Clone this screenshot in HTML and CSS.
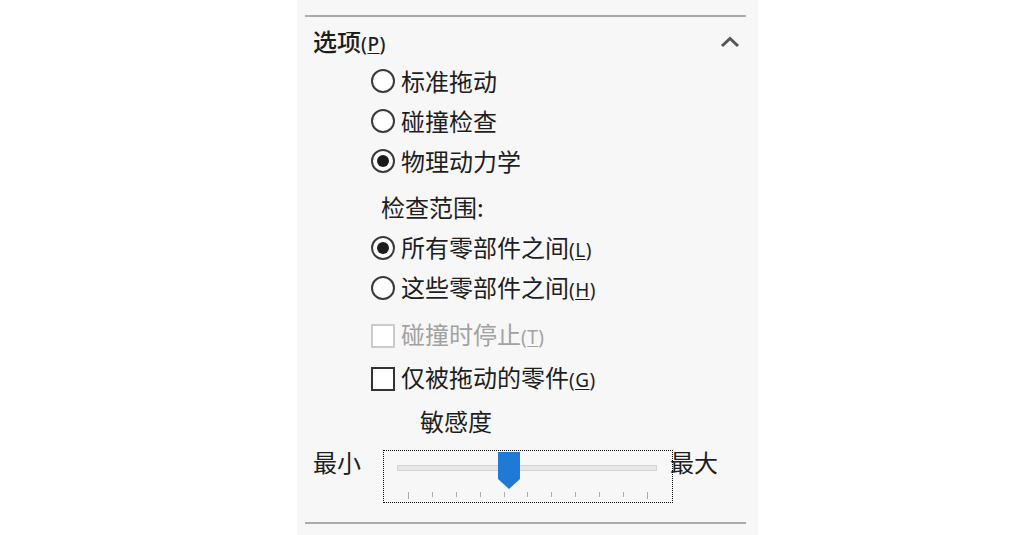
FILE: index.html
```html
<!DOCTYPE html>
<html lang="zh-CN">
<head>
<meta charset="utf-8">
<title>选项</title>
<link rel="stylesheet" href="styles.css">
</head>
<body>
<div class="panel">
  <div class="rule"></div>
  <div class="header">
    <span class="title">选项<span class="key">(<u>P</u>)</span></span>
    <svg class="chevron" width="20" height="12" viewBox="0 0 20 12"><path d="M2 10 L10 2.5 L18 10" fill="none" stroke="#555" stroke-width="3" stroke-linejoin="miter"/></svg>
  </div>
  <div class="group">
    <div class="row"><span class="radio"></span><span class="label">标准拖动</span></div>
    <div class="row"><span class="radio"></span><span class="label">碰撞检查</span></div>
    <div class="row"><span class="radio checked"></span><span class="label">物理动力学</span></div>
  </div>
  <div class="sublabel">检查范围:</div>
  <div class="group">
    <div class="row"><span class="radio checked"></span><span class="label">所有零部件之间<span class="key">(<u>L</u>)</span></span></div>
    <div class="row"><span class="radio"></span><span class="label">这些零部件之间<span class="key">(<u>H</u>)</span></span></div>
  </div>
  <div class="group checks">
    <div class="row crow disabled"><span class="check"></span><span class="label">碰撞时停止<span class="key">(<u>T</u>)</span></span></div>
    <div class="row crow"><span class="check"></span><span class="label">仅被拖动的零件<span class="key">(<u>G</u>)</span></span></div>
  </div>
  <div class="sens">敏感度</div>
  <div class="slider-row">
    <span class="end">最小</span>
    <div class="slider-box">
      <div class="track"></div>
      <div class="ticks">
        <i class="tall"></i><i></i><i></i><i></i><i></i><i></i><i></i><i></i><i></i><i></i><i class="tall"></i>
      </div>
      <svg class="thumb" width="22" height="37" viewBox="0 0 22 37"><path d="M0 0 H22 V27 L11 37 L0 27 Z" fill="#2079d4"/></svg>
    </div>
    <span class="end end-max">最大</span>
  </div>
  <div class="rule bottom"></div>
</div>
</body>
</html>
```

FILE: styles.css
```css
html, body {
  margin: 0;
  padding: 0;
  background: #ffffff;
}
body {
  font-family: "Noto Sans CJK SC", "Noto Sans", sans-serif;
  color: #1e1e1e;
  font-size: 24px;
}
.panel {
  margin-left: 297px;
  width: 461px;
  height: 535px;
  background: #f7f7f7;
  padding-top: 15px;
  box-sizing: border-box;
  display: flex;
  flex-direction: column;
}
.rule {
  margin: 0 12px 0 8px;
  height: 2px;
  background: #ababab;
  flex: none;
}
.rule.bottom {
  margin-top: 19px;
}
.header {
  height: 44px;
  padding: 6px 18px 0 16px;
  box-sizing: border-box;
  display: flex;
  align-items: center;
  justify-content: space-between;
}
.title {
  font-weight: 500;
  line-height: 38px;
}
.key {
  font-family: "Noto Sans", sans-serif;
  font-size: 19px;
  letter-spacing: 0.5px;
}
.key u {
  text-decoration-thickness: 1px;
  text-underline-offset: 2px;
}
.chevron {
  display: block;
}
.group {
  padding-left: 74px;
  display: flex;
  flex-direction: column;
}
.row {
  height: 40px;
  display: flex;
  align-items: center;
  gap: 6px;
}
.label {
  line-height: 40px;
  white-space: nowrap;
}
.radio {
  width: 24px;
  height: 24px;
  box-sizing: border-box;
  border: 2px solid #3a3a3a;
  border-radius: 50%;
  background: #ffffff;
  display: flex;
  align-items: center;
  justify-content: center;
  flex: none;
}
.radio.checked::after {
  content: "";
  width: 12px;
  height: 12px;
  border-radius: 50%;
  background: #1c1c1c;
}
.sublabel {
  height: 47px;
  padding: 5px 0 0 84px;
  box-sizing: border-box;
  line-height: 42px;
}
.checks {
  margin-top: 6px;
}
.crow {
  height: 43px;
}
.check {
  width: 24px;
  height: 24px;
  box-sizing: border-box;
  border: 2px solid #333333;
  background: #ffffff;
  flex: none;
}
.disabled .check {
  border-color: #cccccc;
}
.disabled .label {
  color: #a2a2a2;
}
.sens {
  height: 42px;
  line-height: 42px;
  padding-left: 123px;
}
.slider-row {
  margin-top: 8px;
  padding-left: 16px;
  display: flex;
  align-items: flex-start;
  gap: 22px;
}
.end {
  line-height: 24px;
}
.end-max {
  margin-left: -25px;
}
.slider-box {
  width: 290px;
  height: 53px;
  box-sizing: border-box;
  border: 1px dotted #000000;
  padding: 14px 0 0 13px;
  position: relative;
  flex: none;
}
.track {
  width: 260px;
  height: 6px;
  box-sizing: border-box;
  background: #e6e6e6;
  border: 1px solid #d3d3d3;
}
.ticks {
  margin: 21px 0 0 11px;
  width: 240px;
  display: flex;
  justify-content: space-between;
  align-items: flex-start;
}
.ticks i {
  display: block;
  width: 1px;
  height: 5px;
  background: #ababab;
}
.ticks i.tall {
  height: 7px;
}
.thumb {
  position: absolute;
  left: 114px;
  top: 1px;
  display: block;
}
```
